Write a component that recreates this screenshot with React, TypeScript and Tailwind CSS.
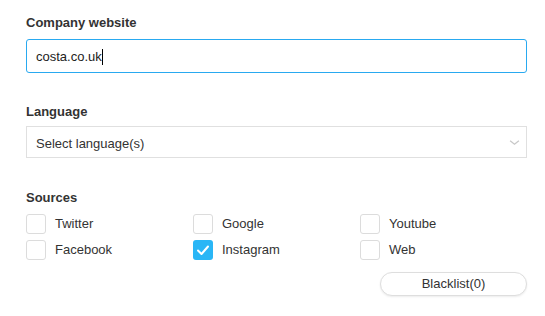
const sources = [
  { name: "Twitter", checked: false },
  { name: "Google", checked: false },
  { name: "Youtube", checked: false },
  { name: "Facebook", checked: false },
  { name: "Instagram", checked: true },
  { name: "Web", checked: false },
];

function Checkbox({ checked }: { checked: boolean }) {
  if (checked) {
    return (
      <span className="w-5 h-5 rounded-[3px] bg-[#29b6f6] flex items-center justify-center">
        <svg viewBox="0 0 20 20" className="w-5 h-5" fill="none" stroke="#fff" strokeWidth={2} strokeLinecap="round" strokeLinejoin="round">
          <polyline points="5 10.5 8.5 14 15 6.5" />
        </svg>
      </span>
    );
  }
  return <span className="w-5 h-5 rounded-[3px] border border-[#dcdcdc] bg-white" />;
}

export default function App() {
  return (
    <div className="w-[545px] h-[316px] bg-white px-[26px] pt-[15px] font-['Liberation_Sans',Arial,sans-serif] text-[#333]">
      {/* Company website */}
      <div className="text-[13px] font-bold leading-[16px] text-[#333]">Company website</div>
      <div className="mt-[8px] h-[34px] w-[501px] rounded-[3px] border border-[#29a9f0] flex items-center px-[9px] pt-[2px]">
        <span className="text-[13px] text-[#222]">costa.co.uk</span>
        <span className="w-px h-[16px] bg-black" />
      </div>

      {/* Language */}
      <div className="mt-[31px] text-[13px] font-bold leading-[16px] text-[#333]">Language</div>
      <div className="mt-[6px] h-[32px] w-[501px] border border-[#e0e0e0] flex items-center justify-between pl-[9px] pr-[6px]">
        <span className="text-[13px] text-[#333] pt-[4px]">Select language(s)</span>
        <svg viewBox="0 0 12 8" className="w-[11px] h-[7px]" fill="none" stroke="#c8c8c8" strokeWidth={1.5}>
          <polyline points="1 2 6 6 11 2" />
        </svg>
      </div>

      {/* Sources */}
      <div className="mt-[32px] text-[13px] font-bold leading-[16px] text-[#333]">Sources</div>
      <div className="mt-[8px] w-[501px] grid grid-cols-3 gap-y-[6px]">
        {sources.map((s) => (
          <label key={s.name} className="flex items-center gap-[9px] h-[20px]">
            <Checkbox checked={s.checked} />
            <span className="text-[13px] text-[#333]">{s.name}</span>
          </label>
        ))}
      </div>

      <div className="mt-[12px] w-[501px] flex justify-end">
        <button className="w-[147px] h-[24px] rounded-full border border-[#dedede] shadow-[0_1px_2px_rgba(0,0,0,0.08)] text-[13px] text-[#333] bg-white">
          Blacklist(0)
        </button>
      </div>
    </div>
  );
}
